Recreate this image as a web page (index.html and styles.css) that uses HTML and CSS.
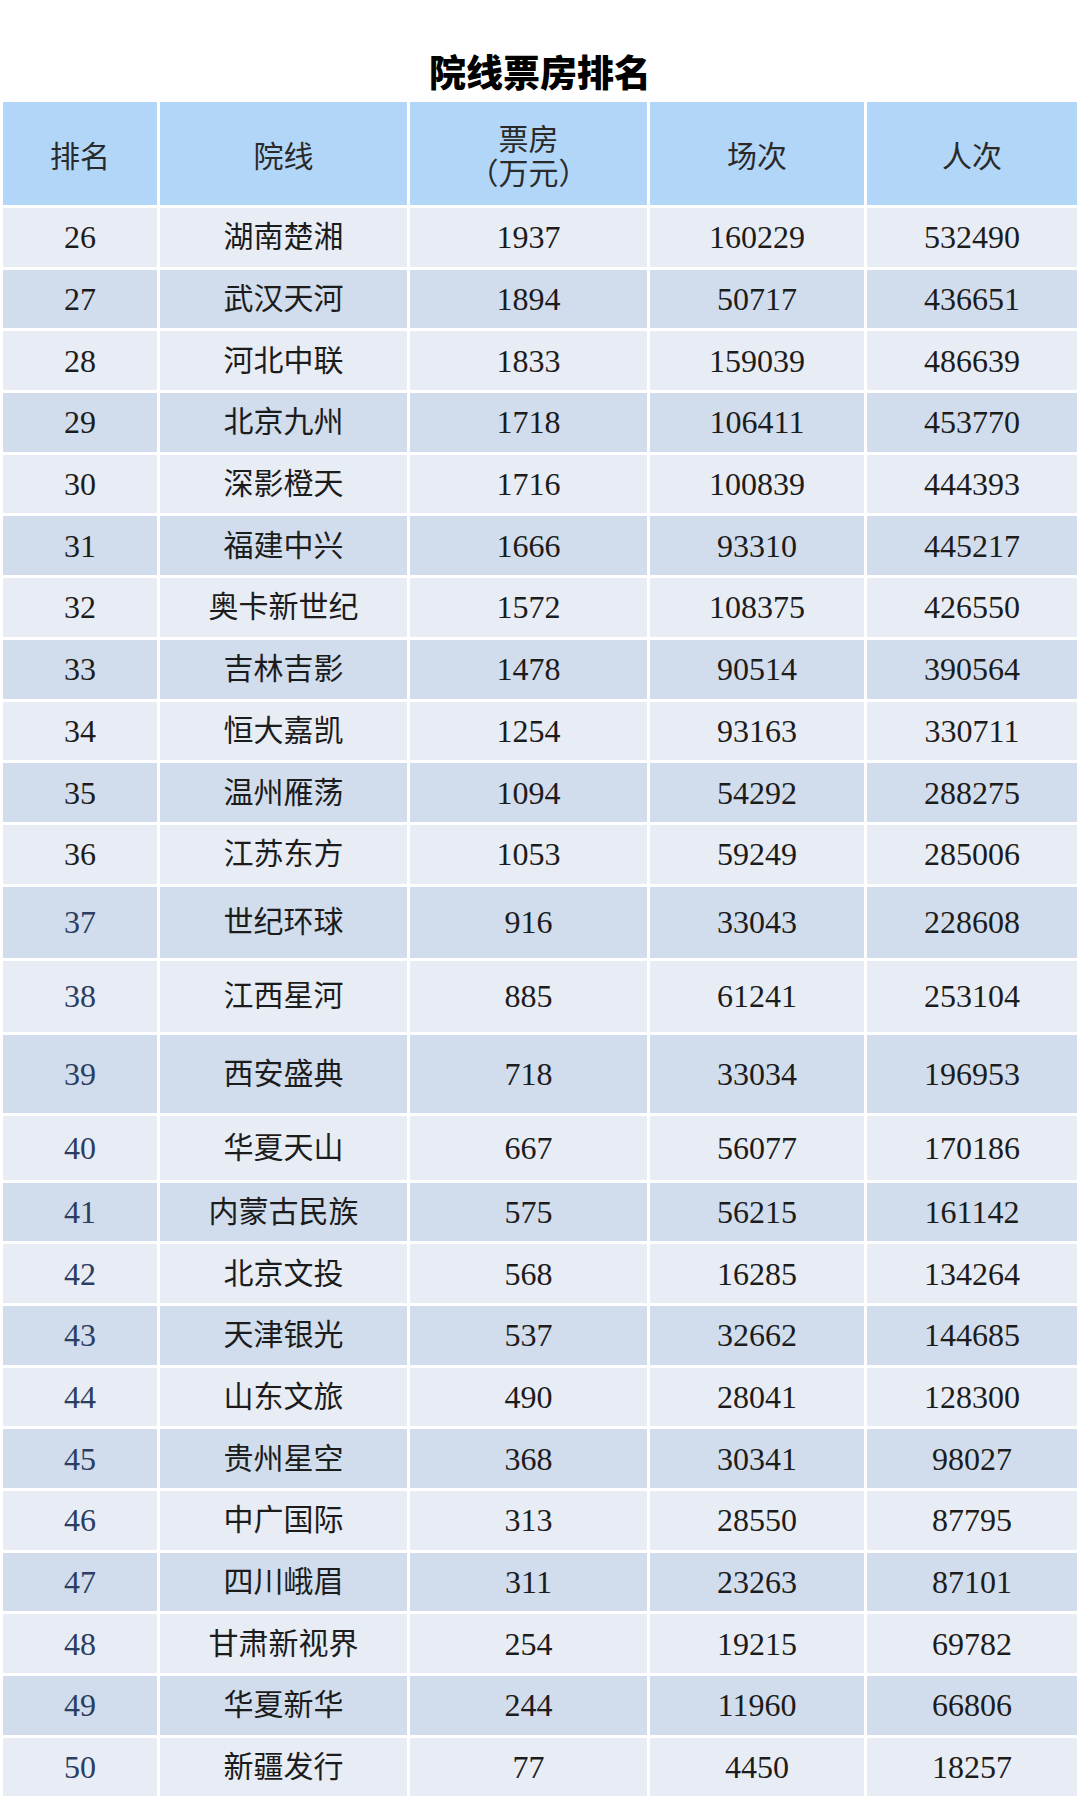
FILE: index.html
```html
<!DOCTYPE html>
<html lang="zh-CN">
<head>
<meta charset="utf-8">
<title>院线票房排名</title>
<link rel="stylesheet" href="styles.css">
</head>
<body>
<h1 class="title">院线票房排名</h1>
<table class="rank-table">
  <colgroup>
    <col class="c-rank"><col class="c-name"><col class="c-box"><col class="c-shows"><col class="c-people">
  </colgroup>
  <thead>
    <tr class="head-row">
      <th>排名</th>
      <th>院线</th>
      <th><span class="line">票房</span><span class="line unit">（万元）</span></th>
      <th>场次</th>
      <th>人次</th>
    </tr>
  </thead>
  <tbody>
    <tr class="light"><td class="rank">26</td><td class="name">湖南楚湘</td><td>1937</td><td>160229</td><td>532490</td></tr>
    <tr class="dark"><td class="rank">27</td><td class="name">武汉天河</td><td>1894</td><td>50717</td><td>436651</td></tr>
    <tr class="light"><td class="rank">28</td><td class="name">河北中联</td><td>1833</td><td>159039</td><td>486639</td></tr>
    <tr class="dark"><td class="rank">29</td><td class="name">北京九州</td><td>1718</td><td>106411</td><td>453770</td></tr>
    <tr class="light"><td class="rank">30</td><td class="name">深影橙天</td><td>1716</td><td>100839</td><td>444393</td></tr>
    <tr class="dark"><td class="rank">31</td><td class="name">福建中兴</td><td>1666</td><td>93310</td><td>445217</td></tr>
    <tr class="light"><td class="rank">32</td><td class="name">奥卡新世纪</td><td>1572</td><td>108375</td><td>426550</td></tr>
    <tr class="dark"><td class="rank">33</td><td class="name">吉林吉影</td><td>1478</td><td>90514</td><td>390564</td></tr>
    <tr class="light"><td class="rank">34</td><td class="name">恒大嘉凯</td><td>1254</td><td>93163</td><td>330711</td></tr>
    <tr class="dark"><td class="rank">35</td><td class="name">温州雁荡</td><td>1094</td><td>54292</td><td>288275</td></tr>
    <tr class="light"><td class="rank">36</td><td class="name">江苏东方</td><td>1053</td><td>59249</td><td>285006</td></tr>
    <tr class="dark tall"><td class="rank blue">37</td><td class="name">世纪环球</td><td>916</td><td>33043</td><td>228608</td></tr>
    <tr class="light tall"><td class="rank blue">38</td><td class="name">江西星河</td><td>885</td><td>61241</td><td>253104</td></tr>
    <tr class="dark taller"><td class="rank blue">39</td><td class="name">西安盛典</td><td>718</td><td>33034</td><td>196953</td></tr>
    <tr class="light mid"><td class="rank blue">40</td><td class="name">华夏天山</td><td>667</td><td>56077</td><td>170186</td></tr>
    <tr class="dark"><td class="rank blue">41</td><td class="name">内蒙古民族</td><td>575</td><td>56215</td><td>161142</td></tr>
    <tr class="light"><td class="rank blue">42</td><td class="name">北京文投</td><td>568</td><td>16285</td><td>134264</td></tr>
    <tr class="dark"><td class="rank blue">43</td><td class="name">天津银光</td><td>537</td><td>32662</td><td>144685</td></tr>
    <tr class="light"><td class="rank blue">44</td><td class="name">山东文旅</td><td>490</td><td>28041</td><td>128300</td></tr>
    <tr class="dark"><td class="rank blue">45</td><td class="name">贵州星空</td><td>368</td><td>30341</td><td>98027</td></tr>
    <tr class="light"><td class="rank blue">46</td><td class="name">中广国际</td><td>313</td><td>28550</td><td>87795</td></tr>
    <tr class="dark"><td class="rank blue">47</td><td class="name">四川峨眉</td><td>311</td><td>23263</td><td>87101</td></tr>
    <tr class="light"><td class="rank blue">48</td><td class="name">甘肃新视界</td><td>254</td><td>19215</td><td>69782</td></tr>
    <tr class="dark"><td class="rank blue">49</td><td class="name">华夏新华</td><td>244</td><td>11960</td><td>66806</td></tr>
    <tr class="light"><td class="rank blue">50</td><td class="name">新疆发行</td><td>77</td><td>4450</td><td>18257</td></tr>
  </tbody>
</table>
</body>
</html>
```

FILE: styles.css
```css
html, body {
  margin: 0;
  padding: 0;
  background: #ffffff;
}

body {
  width: 1080px;
  font-family: "Liberation Serif", "Noto Sans CJK SC", serif;
  color: #1c1c1c;
}

.title {
  margin: 0 0 6px 0;
  padding-top: 49px;
  height: 44px;
  line-height: 44px;
  text-align: center;
  font-family: "Noto Sans CJK SC", sans-serif;
  font-weight: 900;
  font-size: 37px;
  color: #000000;
}

.rank-table {
  width: 1080px;
  border-collapse: separate;
  border-spacing: 3px;
  table-layout: fixed;
  background: #ffffff;
}

.c-rank { width: 154px; }
.c-name { width: 247px; }
.c-box { width: 237px; }
.c-shows { width: 214px; }
.c-people { width: 210px; }

.rank-table th,
.rank-table td {
  padding: 0;
  text-align: center;
  vertical-align: middle;
}

.head-row th {
  height: 103px;
  background: #b2d6f8;
  font-family: "Noto Sans CJK SC", sans-serif;
  font-weight: 400;
  font-size: 30px;
  line-height: 34px;
  color: #2a2a2a;
}

.line {
  display: block;
}

.unit {
  font-family: "Noto Sans CJK SC", sans-serif;
  text-spacing-trim: space-all;
}

.rank-table td {
  height: 58.7px;
  font-size: 32px;
  line-height: 36px;
}

.rank-table td.name {
  font-size: 30px;
}

.light td { background: #e8ecf5; }
.dark td { background: #d1ddec; }

.tall td { height: 71px; }
.taller td { height: 78px; }
.mid td { height: 64px; }

.rank-table td.blue {
  color: #2b3d63;
}
```
